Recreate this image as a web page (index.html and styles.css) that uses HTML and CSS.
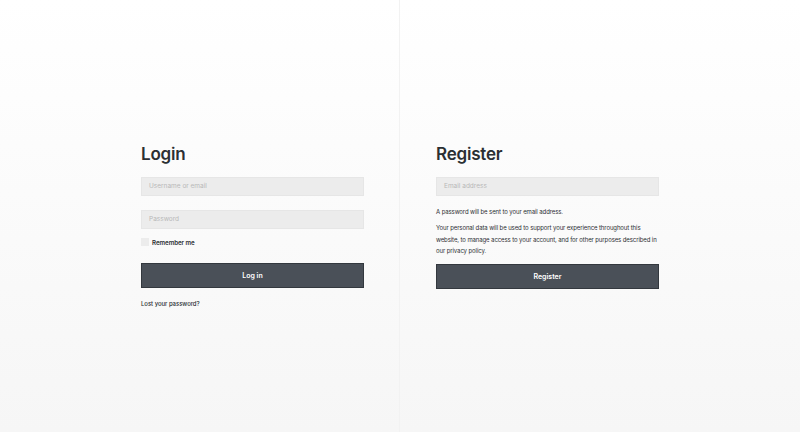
FILE: index.html
```html
<!DOCTYPE html>
<html>
<head>
<meta charset="utf-8">
<link rel="stylesheet" href="styles.css">
</head>
<body>
<div class="page">
  <div class="half left">
    <section class="col">
      <h2 class="title">Login</h2>
      <div class="field">Username or email</div>
      <div class="field second">Password</div>
      <label class="remember"><span class="box"></span>Remember me</label>
      <button class="btn">Log in</button>
      <a class="lost">Lost your password?</a>
    </section>
  </div>
  <div class="half right">
    <section class="col">
      <h2 class="title">Register</h2>
      <div class="field">Email address</div>
      <p class="note">A password will be sent to your email address.</p>
      <p class="privacy">Your personal data will be used to support your experience throughout this website, to manage access to your account, and for other purposes described in our privacy policy.</p>
      <button class="btn reg">Register</button>
    </section>
  </div>
</div>
</body>
</html>
```
FILE: styles.css
```css
* { box-sizing: border-box; }
html, body { margin: 0; height: 100%; }
body {
  font-family: Inter, "Noto Sans", sans-serif;
  color: #2b2f33;
  background: linear-gradient(#ffffff 0%, #f6f6f6 100%);
}
.page {
  display: flex;
  height: 432px;
}
.half {
  width: 400px;
  padding-top: 140px;
}
.left { padding-left: 141px; border-right: 1px solid #f2f2f2; }
.right { padding-left: 36px; }
.col {
  width: 223px;
  display: flex;
  flex-direction: column;
}
.title {
  margin: 0;
  font-size: 17px;
  font-weight: 600;
  line-height: 28px;
  letter-spacing: -0.2px;
}
.field {
  margin-top: 9px;
  height: 19px;
  background: #ececec;
  border: 1px solid #e6e6e6;
  color: #b8b8b8;
  font-size: 6.5px;
  line-height: 17px;
  padding-left: 7px;
}
.field.second { margin-top: 14px; }
.remember {
  margin-top: 9px;
  display: flex;
  align-items: center;
  font-size: 6.2px;
  letter-spacing: -0.05px;
  font-weight: 600;
  height: 8px;
}
.box {
  width: 8px;
  height: 8px;
  background: #ececec;
  margin-right: 3px;
}
.btn {
  margin-top: 17px;
  height: 25px;
  background: #4a5058;
  border: 1px solid #33383e;
  color: #ffffff;
  font-family: inherit;
  font-size: 7px;
  font-weight: 600;
  padding: 0;
}
.btn.reg { margin-top: 7px; }
.lost {
  margin-top: 12px;
  font-size: 6px;
  letter-spacing: -0.05px;
  font-weight: 500;
}
.note {
  margin: 10px 0 0;
  font-size: 6px;
  letter-spacing: -0.1px;
  line-height: 11px;
}
.privacy {
  margin: 5px 0 0;
  font-size: 6px;
  letter-spacing: -0.1px;
  line-height: 11.5px;
}
```
